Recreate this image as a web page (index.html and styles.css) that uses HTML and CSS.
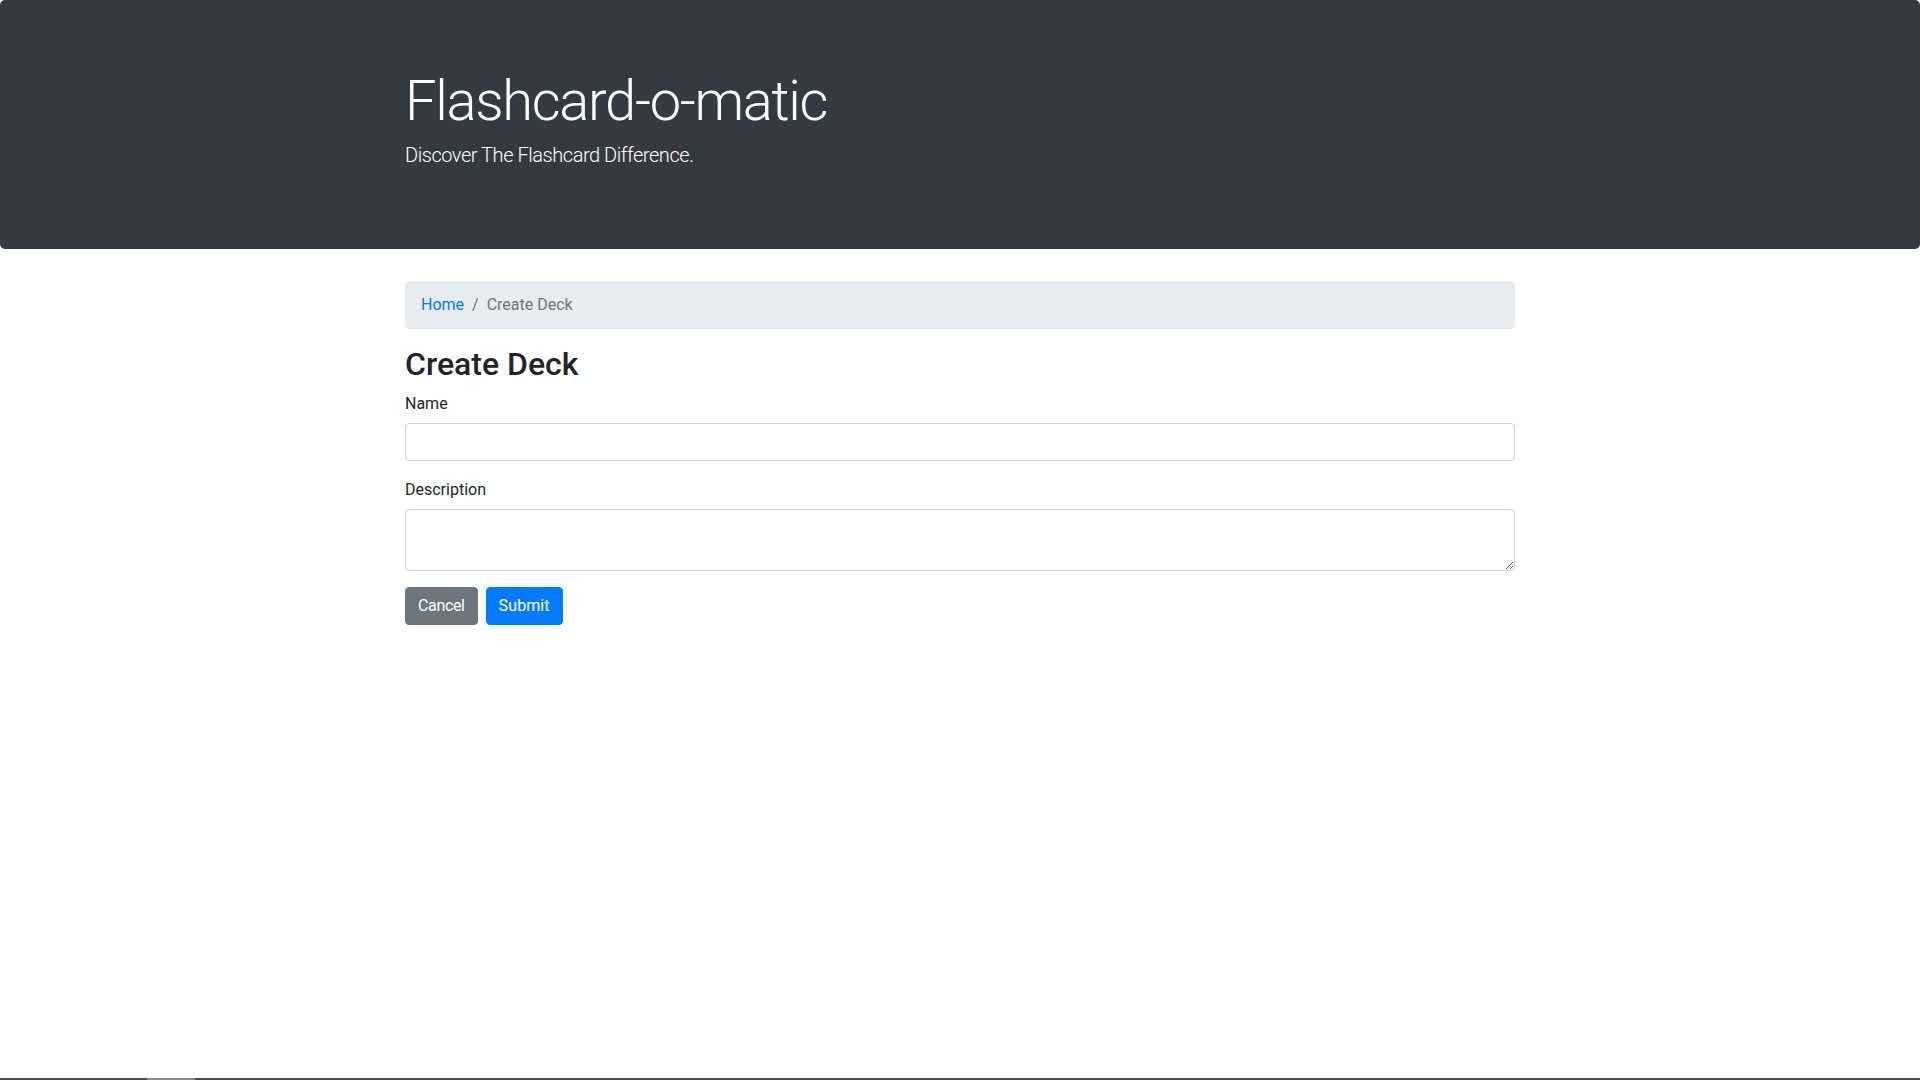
FILE: index.html
```html
<!DOCTYPE html>
<html lang="en">
<head>
<meta charset="utf-8">
<title>Flashcard-o-matic</title>
<link rel="stylesheet" href="styles.css">
</head>
<body>
<header class="jumbotron">
  <div class="container">
    <h1 class="display">Flashcard-o-matic</h1>
    <p class="lead">Discover The Flashcard Difference.</p>
  </div>
</header>
<main class="container">
  <nav class="breadcrumb">
    <a href="#" class="crumb-link">Home</a>
    <span class="crumb-sep">/</span>
    <span class="crumb-active">Create Deck</span>
  </nav>
  <h2 class="page-title">Create Deck</h2>
  <form class="deck-form">
    <div class="form-group">
      <label class="form-label" for="name">Name</label>
      <input class="form-control" id="name" type="text">
    </div>
    <div class="form-group">
      <label class="form-label" for="description">Description</label>
      <textarea class="form-control textarea" id="description" rows="2"></textarea>
    </div>
    <div class="actions">
      <button type="button" class="btn btn-secondary">Cancel</button>
      <button type="submit" class="btn btn-primary">Submit</button>
    </div>
  </form>
</main>
<div class="taskbar"><span class="taskbar-active"></span></div>
</body>
</html>
```
FILE: styles.css
```css
* { box-sizing: border-box; }
html, body { margin: 0; padding: 0; }
body {
  font-family: Roboto, "Liberation Sans", sans-serif;
  font-size: 16px;
  line-height: 1.5;
  color: #212529;
  background: #fff;
}
.container {
  width: 1140px;
  margin: 0 auto;
  padding: 0 15px;
}
.jumbotron {
  background: #343a40;
  color: #fff;
  padding: 64px 0;
  margin-bottom: 32px;
  border-radius: 5px;
}
.display {
  margin: 4px 0 5px;
  font-size: 56px;
  font-weight: 300;
  line-height: 1.2;
  letter-spacing: -1.3px;
}
.lead {
  margin: 0 0 15px;
  font-size: 20px;
  font-weight: 300;
  line-height: 1.5;
  letter-spacing: -0.45px;
}
.breadcrumb {
  display: flex;
  align-items: center;
  background: #e9ecef;
  border-radius: 4px;
  padding: 12px 16px;
  margin-bottom: 16px;
  line-height: 24px;
}
.crumb-link { color: #007bff; text-decoration: none; }
.crumb-sep { color: #6c757d; padding: 0 8px; }
.crumb-active { color: #6c757d; }
.page-title {
  margin: 0 0 7px;
  font-size: 32px;
  font-weight: 500;
  line-height: 1.2;
}
.deck-form { margin: 0; }
.form-group { margin-bottom: 16px; }
.form-label {
  display: inline-block;
  padding-top: 1px;
  margin-bottom: 7px;
  font-size: 16px;
}
.form-control {
  display: block;
  width: 100%;
  height: 38px;
  padding: 6px 12px;
  font-family: inherit;
  font-size: 16px;
  line-height: 1.5;
  color: #495057;
  background: #fff;
  border: 1px solid #ced4da;
  border-radius: 4px;
  margin: 0;
}
.textarea {
  height: 62px;
  resize: vertical;
}
.actions {
  display: flex;
  gap: 8px;
}
.btn {
  font-family: inherit;
  font-size: 16px;
  line-height: 1.5;
  padding: 6px 12px;
  border: 1px solid transparent;
  border-radius: 4px;
  color: #fff;
  cursor: pointer;
}
.btn-secondary { background: #6c757d; border-color: #6c757d; letter-spacing: -0.35px; }
.btn-primary { background: #007bff; border-color: #007bff; letter-spacing: 0.1px; }
.taskbar {
  position: fixed;
  left: 0;
  right: 0;
  bottom: 0;
  height: 2px;
  background: #4a4a4a;
}
.taskbar-active {
  position: absolute;
  left: 147px;
  width: 48px;
  top: 0;
  bottom: 0;
  background: #8a8a8a;
}
```
